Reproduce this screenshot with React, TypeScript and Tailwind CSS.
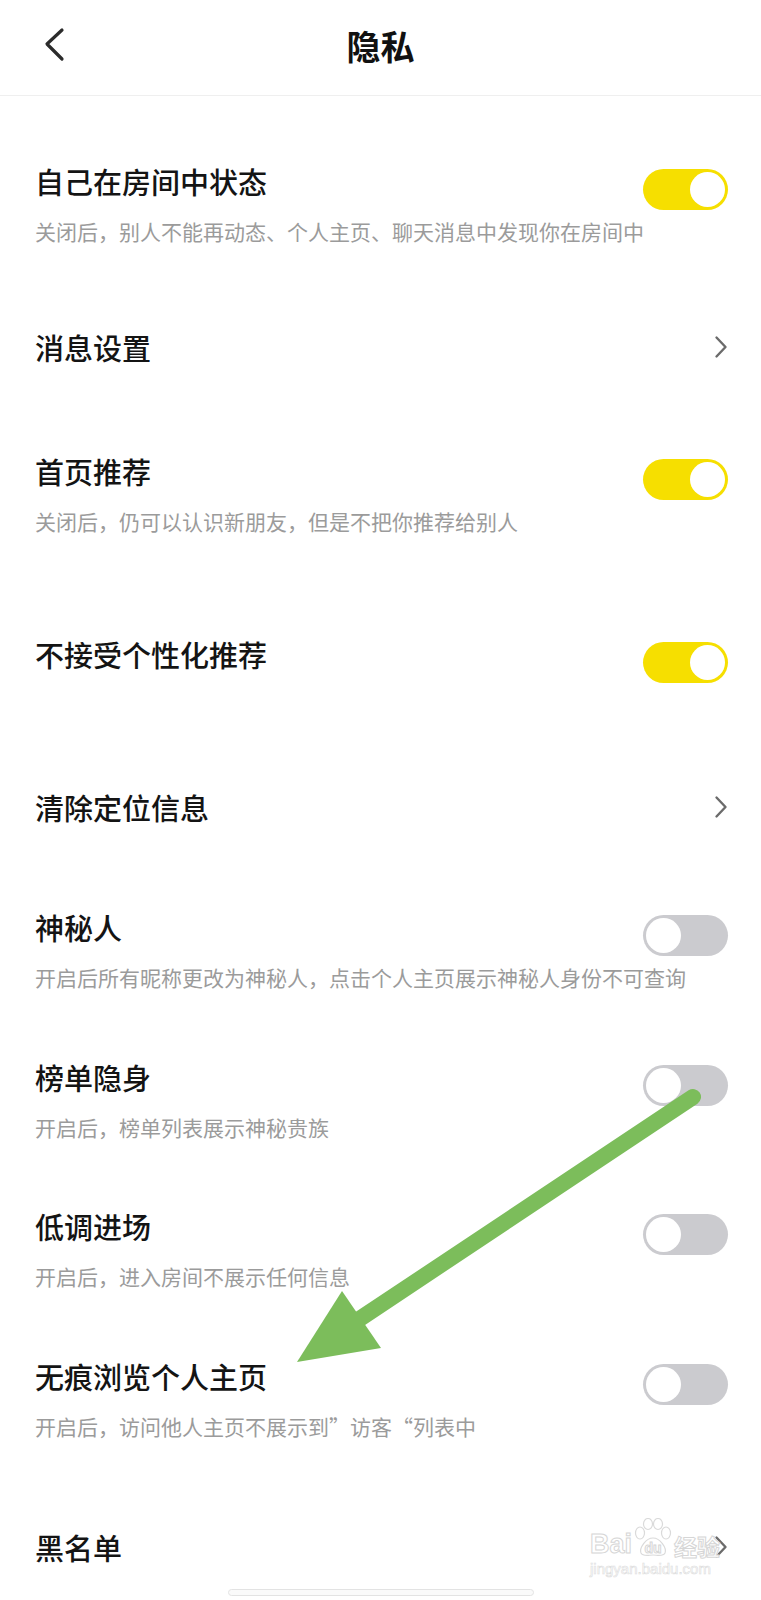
import React from "react";

type Row = {
  title: string;
  desc?: string;
  kind: "on" | "off" | "link";
  gap: string;
};

const rows: Row[] = [
  { title: "自己在房间中状态", desc: "关闭后，别人不能再动态、个人主页、聊天消息中发现你在房间中", kind: "on", gap: "mt-[65px]" },
  { title: "消息设置", kind: "link", gap: "mt-[81px]" },
  { title: "首页推荐", desc: "关闭后，仍可以认识新朋友，但是不把你推荐给别人", kind: "on", gap: "mt-[84px]" },
  { title: "不接受个性化推荐", kind: "on", gap: "mt-[98px]" },
  { title: "清除定位信息", kind: "link", gap: "mt-[104px]" },
  { title: "神秘人", desc: "开启后所有昵称更改为神秘人，点击个人主页展示神秘人身份不可查询", kind: "off", gap: "mt-[80px]" },
  { title: "榜单隐身", desc: "开启后，榜单列表展示神秘贵族", kind: "off", gap: "mt-[65px]" },
  { title: "低调进场", desc: "开启后，进入房间不展示任何信息", kind: "off", gap: "mt-[64px]" },
  { title: "无痕浏览个人主页", desc: "开启后，访问他人主页不展示到”访客“列表中", kind: "off", gap: "mt-[65px]" },
  { title: "黑名单", kind: "link", gap: "mt-[86px]" },
];

function Toggle({ on }: { on: boolean }) {
  return (
    <div
      className={
        "mt-[8px] flex h-[41px] w-[85px] shrink-0 items-center rounded-full px-[3px] " +
        (on ? "justify-end bg-[#f6df00]" : "justify-start bg-[#cbcbcf]")
      }
    >
      <div className="h-[35px] w-[35px] rounded-full bg-white" />
    </div>
  );
}

function Chevron() {
  return (
    <svg width="14" height="24" viewBox="0 0 14 24" className="shrink-0 self-center">
      <path d="M2.5 2.5 L11.5 12 L2.5 21.5" fill="none" stroke="#6b6b6b" strokeWidth="2.4" strokeLinecap="round" strokeLinejoin="round" />
    </svg>
  );
}

function Paw() {
  return (
    <svg width="42" height="40" viewBox="0 0 42 40" className="absolute left-0 top-0">
      <g fill="none" stroke="#dadada" strokeWidth="1.2">
        <ellipse cx="8" cy="15" rx="4.5" ry="6" />
        <ellipse cx="16" cy="6" rx="4.5" ry="5.5" />
        <ellipse cx="26" cy="6" rx="4.5" ry="5.5" />
        <ellipse cx="34" cy="15" rx="4.5" ry="6" />
        <path d="M21 20 C14 20 7 30 9 35 C11 39 17 37 21 37 C25 37 31 39 33 35 C35 30 28 20 21 20 Z" />
      </g>
    </svg>
  );
}

export default function App() {
  return (
    <div
      className="relative h-[1600px] w-[761px] overflow-hidden bg-white"
      style={{ fontFamily: '"Noto Sans CJK SC", "Noto Sans", sans-serif' }}
    >
      {/* header */}
      <header className="relative flex h-[96px] items-center justify-center border-b border-[#efefef] pb-[4px]">
        <svg width="30" height="40" viewBox="0 0 30 40" className="absolute left-[40px] top-[26px]">
          <path d="M22 4 L7 18 L22 33" fill="none" stroke="#2b2b2b" strokeWidth="3.2" strokeLinecap="round" strokeLinejoin="round" />
        </svg>
        <h1 className="text-[34px] font-semibold leading-[40px] text-[#111]">隐私</h1>
      </header>

      {/* settings list */}
      <div className="flex flex-col pl-[35px] pr-[33px]">
        {rows.map((r) => (
          <div key={r.title} className={"flex items-start justify-between " + r.gap}>
            <div className="flex min-w-0 flex-1 flex-col">
              <div className="whitespace-nowrap text-[29px] font-medium leading-[40px] text-[#141414]">{r.title}</div>
              {r.desc && (
                <div className="mt-[15px] whitespace-nowrap text-[21px] leading-[30px] text-[#9b9b9b]">{r.desc}</div>
              )}
            </div>
            {r.kind === "link" ? <Chevron /> : <Toggle on={r.kind === "on"} />}
          </div>
        ))}
        <div className="ml-[-2px] mt-[22px] h-[7px] w-[306px] self-center rounded-full border border-[#e3e3e3] bg-[#fafafa]" />
      </div>

      {/* annotation arrow */}
      <svg className="pointer-events-none absolute left-0 top-0" width="761" height="1600" viewBox="0 0 761 1600">
        <line x1="693" y1="1097" x2="355" y2="1322" stroke="#7cbd5b" strokeWidth="16" strokeLinecap="round" />
        <polygon points="297,1362 342,1291 381,1348" fill="#7cbd5b" />
      </svg>

      {/* watermark */}
      <div className="pointer-events-none absolute left-[590px] top-[1518px] flex flex-col items-start text-white [-webkit-text-stroke:1px_#d6d6d6]">
        <div className="flex items-end leading-none">
          <span className="font-['Liberation_Sans',sans-serif] text-[27px] font-bold">Bai</span>
          <span className="relative flex h-[40px] w-[42px] items-end justify-center pb-[3px] font-['Liberation_Sans',sans-serif] text-[14px] font-bold">
            <Paw />
            <span className="relative">du</span>
          </span>
          <span className="text-[23px] font-bold">经验</span>
        </div>
        <span className="mt-[3px] font-['Liberation_Sans',sans-serif] text-[15px] leading-none [-webkit-text-stroke:0.6px_#dcdcdc]">
          jingyan.baidu.com
        </span>
      </div>
    </div>
  );
}
